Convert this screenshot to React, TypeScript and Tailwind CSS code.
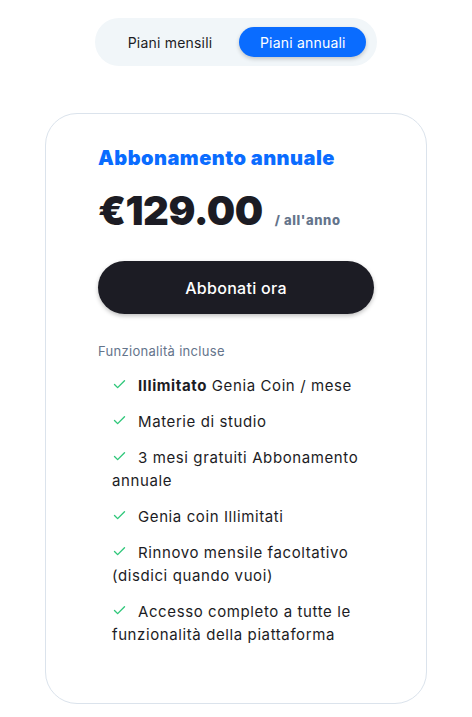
import { Check } from 'lucide-react';

const features = [
  { bold: 'Illimitato', text: ' Genia Coin / mese' },
  { text: 'Materie di studio' },
  { text: '3 mesi gratuiti Abbonamento annuale' },
  { text: 'Genia coin Illimitati' },
  { text: 'Rinnovo mensile facoltativo (disdici quando vuoi)' },
  { text: 'Accesso completo a tutte le funzionalità della piattaforma' },
];

export default function App() {
  return (
    <div className="min-h-screen bg-white font-['Inter','Open_Sans',sans-serif] text-[#1c1c24]">
      <div className="flex justify-center pt-[18px]">
        <div className="flex items-center gap-[27px] rounded-full bg-[#f1f6f9] py-[9px] pl-[33px] pr-[11px]">
          <button className="text-[14px] tracking-[0.2px] text-[#1c1c24]">Piani mensili</button>
          <button className="h-[30px] w-[127px] rounded-full bg-[#0a6cff] text-[14px] tracking-[0.2px] text-white shadow-[0_2px_4px_rgba(0,0,0,0.2)]">
            Piani annuali
          </button>
        </div>
      </div>

      <div className="mx-[45px] mt-[47px] rounded-[32px] border border-[#dbe3ec] px-[52px] pb-[57px] pt-[29px]">
        <h2 className="text-[20px] font-black tracking-[0.45px] text-[#0a6cff]">Abbonamento annuale</h2>

        <div className="mt-[13px] flex items-baseline gap-[12px]">
          <span className="text-[40px] font-black leading-[50px] tracking-[-0.5px]">€129.00</span>
          <span className="text-[13px] font-extrabold tracking-[0.6px] text-[#64748b]">/ all'anno</span>
        </div>

        <button className="mt-[25px] h-[53px] w-full rounded-full bg-[#1c1c24] text-[16px] font-medium tracking-[0.3px] text-white shadow-[0_2px_4px_rgba(0,0,0,0.25)]">
          Abbonati ora
        </button>

        <p className="mt-[28px] text-[13px] tracking-[0.3px] text-[#64748b]">Funzionalità incluse</p>

        <ul className="mt-[12px] flex flex-col gap-[13px] pl-[14px]">
          {features.map((f, i) => (
            <li key={i} className="text-[15px] leading-[23px] tracking-[0.6px]">
              <Check size={15} strokeWidth={2.2} className="mr-[11px] inline-block align-[-1px] text-[#2fc77a]" />
              {f.bold && <b className="font-bold">{f.bold}</b>}
              {f.text}
            </li>
          ))}
        </ul>
      </div>
    </div>
  );
}
